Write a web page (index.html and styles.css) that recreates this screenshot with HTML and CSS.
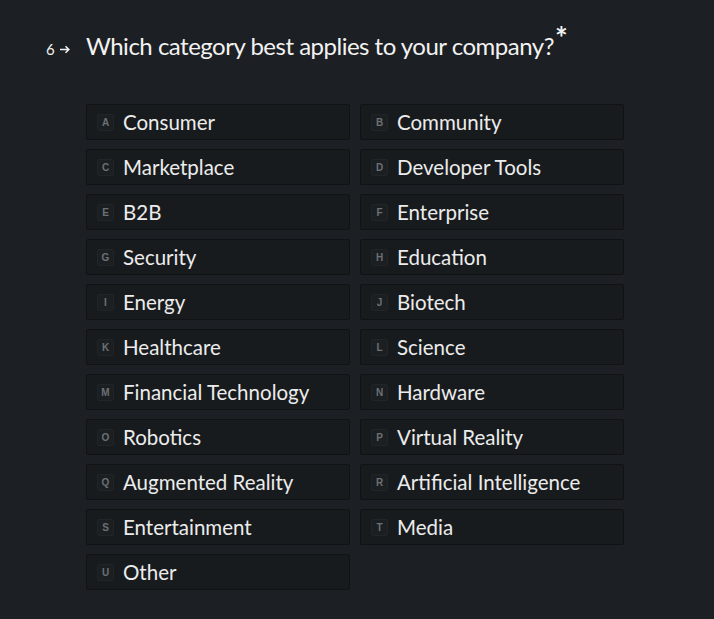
FILE: index.html
```html
<!DOCTYPE html>
<html>
<head>
<meta charset="utf-8">
<link rel="stylesheet" href="styles.css">
</head>
<body>
<div class="page">
  <div class="question">
    <div class="qnum"><span class="num">6</span><svg class="arrow" width="11" height="9" viewBox="0 0 11 9"><path d="M0 4.5H8.5M5.5 1.3L8.8 4.5L5.5 7.7" fill="none" stroke="#f0f0f0" stroke-width="1.6"/></svg></div>
    <h1 class="qtext">Which category best applies to your company?<span class="req">*</span></h1>
  </div>
  <div class="options">
    <div class="opt"><span class="key">A</span><span class="label">Consumer</span></div>
    <div class="opt"><span class="key">B</span><span class="label">Community</span></div>
    <div class="opt"><span class="key">C</span><span class="label">Marketplace</span></div>
    <div class="opt"><span class="key">D</span><span class="label">Developer Tools</span></div>
    <div class="opt"><span class="key">E</span><span class="label">B2B</span></div>
    <div class="opt"><span class="key">F</span><span class="label">Enterprise</span></div>
    <div class="opt"><span class="key">G</span><span class="label">Security</span></div>
    <div class="opt"><span class="key">H</span><span class="label">Education</span></div>
    <div class="opt"><span class="key">I</span><span class="label">Energy</span></div>
    <div class="opt"><span class="key">J</span><span class="label">Biotech</span></div>
    <div class="opt"><span class="key">K</span><span class="label">Healthcare</span></div>
    <div class="opt"><span class="key">L</span><span class="label">Science</span></div>
    <div class="opt"><span class="key">M</span><span class="label">Financial Technology</span></div>
    <div class="opt"><span class="key">N</span><span class="label">Hardware</span></div>
    <div class="opt"><span class="key">O</span><span class="label">Robotics</span></div>
    <div class="opt"><span class="key">P</span><span class="label">Virtual Reality</span></div>
    <div class="opt"><span class="key">Q</span><span class="label">Augmented Reality</span></div>
    <div class="opt"><span class="key">R</span><span class="label">Artificial Intelligence</span></div>
    <div class="opt"><span class="key">S</span><span class="label">Entertainment</span></div>
    <div class="opt"><span class="key">T</span><span class="label">Media</span></div>
    <div class="opt"><span class="key">U</span><span class="label">Other</span></div>
  </div>
</div>
</body>
</html>
```
FILE: styles.css
```css
html, body {
  margin: 0;
  padding: 0;
  background: #1c1f23;
  height: 100%;
}
body {
  font-family: Lato, "Liberation Sans", sans-serif;
  color: #ececec;
}
.page {
  padding: 28px 0 0 46px;
}
.question {
  display: flex;
  align-items: baseline;
}
.qnum {
  width: 40px;
  display: flex;
  align-items: center;
  gap: 5px;
  font-size: 15px;
  color: #f0f0f0;
}
.qtext {
  margin: 0;
  font-weight: 400;
  font-size: 24px;
  line-height: 36px;
  color: #f2f2f2;
  letter-spacing: -0.5px;
}
.req {
  font-size: 30px;
  font-weight: 700;
  position: relative;
  top: -6px;
  margin-left: 1px;
  line-height: 0;
}
.options {
  margin: 40px 0 0 40px;
  display: grid;
  grid-template-columns: 264px 264px;
  column-gap: 10px;
  row-gap: 9px;
}
.opt {
  box-sizing: border-box;
  height: 36px;
  display: flex;
  align-items: center;
  background: #181b1e;
  border: 1px solid #101214;
  border-radius: 2px;
  padding-left: 10px;
}
.key {
  box-sizing: border-box;
  width: 17px;
  height: 17px;
  display: flex;
  align-items: center;
  justify-content: center;
  background: #1c1f22;
  border: 1px solid #222528;
  border-radius: 2px;
  font-size: 10px;
  font-weight: 700;
  color: #6d7074;
  font-family: "Liberation Sans", Arial, sans-serif;
}
.label {
  margin-left: 9px;
  font-size: 20.5px;
  color: #ececec;
}
```
